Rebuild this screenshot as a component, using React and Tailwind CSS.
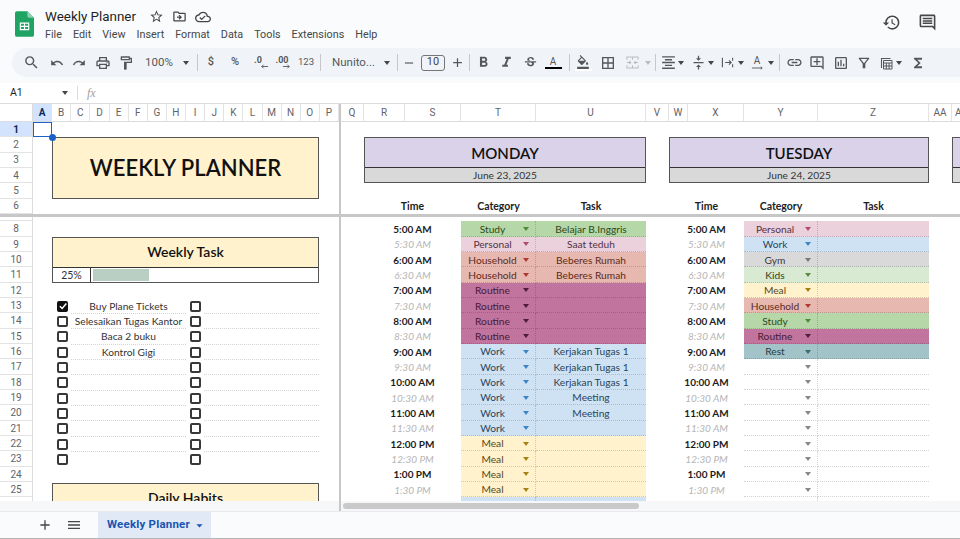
import React from 'react';
import {
  MdSearch, MdUndo, MdRedo, MdOutlineLocalPrintshop, MdOutlineFormatPaint, MdArrowDropDown,
  MdRemove, MdAdd, MdFormatBold, MdFormatItalic, MdStrikethroughS, MdOutlineFormatColorFill,
  MdBorderAll, MdFormatAlignCenter, MdVerticalAlignCenter, MdLink, MdOutlineAddComment,
  MdOutlineInsertChart, MdOutlineFilterAlt, MdFunctions, MdHistory, MdOutlineComment,
  MdStarBorder, MdOutlineDriveFileMove, MdOutlineCloudDone, MdMenu,
} from 'react-icons/md';

const CATS = {
  Study: { cell: 'bg-[#b6d7a8] text-[#2c4a20]', caret: 'border-t-[#4f8a3a]' },
  Personal: { cell: 'bg-[#ead1dc] text-[#55313f]', caret: 'border-t-[#b04a72]' },
  Household: { cell: 'bg-[#e6b8af] text-[#5c2a20]', caret: 'border-t-[#b03a2e]' },
  Routine: { cell: 'bg-[#c0749e] text-[#481a36]', caret: 'border-t-[#4f1c3c]' },
  Work: { cell: 'bg-[#cfe2f3] text-[#27445c]', caret: 'border-t-[#3d85c6]' },
  Meal: { cell: 'bg-[#fff2cc] text-[#574818]', caret: 'border-t-[#a8801a]' },
  Gym: { cell: 'bg-[#d9d9d9] text-[#3a3a3a]', caret: 'border-t-[#777777]' },
  Kids: { cell: 'bg-[#d9ead3] text-[#2c4225]', caret: 'border-t-[#5b8c42]' },
  Rest: { cell: 'bg-[#a2c4c9] text-[#1f3c41]', caret: 'border-t-[#3a6a72]' },
  '': { cell: 'bg-white text-[#333333]', caret: 'border-t-[#888888]' },
};

const TIMES = [
  '5:00 AM', '5:30 AM', '6:00 AM', '6:30 AM', '7:00 AM', '7:30 AM', '8:00 AM', '8:30 AM', '9:00 AM', '9:30 AM',
  '10:00 AM', '10:30 AM', '11:00 AM', '11:30 AM', '12:00 PM', '12:30 PM', '1:00 PM', '1:30 PM', '2:00 PM',
];

const MONDAY = [
  ['Study', 'Belajar B.Inggris'], ['Personal', 'Saat teduh'], ['Household', 'Beberes Rumah'], ['Household', 'Beberes Rumah'],
  ['Routine', ''], ['Routine', ''], ['Routine', ''], ['Routine', ''],
  ['Work', 'Kerjakan Tugas 1'], ['Work', 'Kerjakan Tugas 1'], ['Work', 'Kerjakan Tugas 1'], ['Work', 'Meeting'], ['Work', 'Meeting'], ['Work', ''],
  ['Meal', ''], ['Meal', ''], ['Meal', ''], ['Meal', ''], ['Work', ''],
];

const TUESDAY = [
  ['Personal', ''], ['Work', ''], ['Gym', ''], ['Kids', ''], ['Meal', ''], ['Household', ''], ['Study', ''], ['Routine', ''], ['Rest', ''],
  ['', ''], ['', ''], ['', ''], ['', ''], ['', ''], ['', ''], ['', ''], ['', ''], ['', ''], ['', ''],
];

const LEFT_COLS = ['A', 'B', 'C', 'D', 'E', 'F', 'G', 'H', 'I', 'J', 'K', 'L', 'M', 'N', 'O', 'P'];
const RIGHT_COLS = [
  ['Q', 'w-[23px]'], ['R', 'w-[41px]'], ['S', 'w-[56px]'], ['T', 'w-[75px]'], ['U', 'w-[110px]'], ['V', 'w-[23px]'],
  ['W', 'w-[19px]'], ['X', 'w-[56px]'], ['Y', 'w-[74px]'], ['Z', 'w-[111px]'], ['AA', 'w-[23px]'], ['AB', 'w-[20px]'],
];
const TASKS = ['Buy Plane Tickets', 'Selesaikan Tugas Kantor', 'Baca 2 buku', 'Kontrol Gigi', '', '', '', '', '', '', ''];

const UI = "font-['Roboto',sans-serif]";
const CELL = "font-['Lato',sans-serif]";

const Tool = ({ className = '', children }) => (
  <div className={`flex h-full shrink-0 items-center justify-center text-[#55585a] ${className}`}>{children}</div>
);

const Sep = ({ className = '' }) => <div className={`h-[17px] w-px shrink-0 bg-[#c7c7c7] ${className}`} />;

const Caret = ({ className = '' }) => (
  <div className={`h-0 w-0 border-x-[3.5px] border-t-[4px] border-x-transparent border-t-[#444746] ${className}`} />
);

const Cat = ({ name, task }) => {
  const c = CATS[name];
  return (
    <>
      <div className={`flex h-[15.33px] items-center border-b border-r border-dotted border-[#0000002b] pl-[4px] pr-[6px] pt-[1px] ${c.cell}`}>
        <span className="flex-1 text-center text-[10.2px] leading-none whitespace-nowrap">{name}</span>
        <div className={`ml-[3px] h-0 w-0 border-x-[3.5px] border-t-[4px] border-x-transparent ${c.caret}`} />
      </div>
      <div className={`flex h-[15.33px] items-center justify-center border-b border-dotted border-[#0000002b] pt-[1px] text-[10.2px] leading-none ${c.cell}`}>
        {task}
      </div>
    </>
  );
};

const DayHeader = ({ day, date, width }) => (
  <div className={`h-[46px] shrink-0 border border-[#555555] ${width}`}>
    <div className="flex h-[30px] items-center justify-center border-b border-[#333333] bg-[#d9d2e9] text-[15px] font-semibold text-[#111111]">{day}</div>
    <div className="flex h-[14px] items-center justify-center bg-[#d9d9d9] text-[10.2px] leading-none text-[#333333]">{date}</div>
  </div>
);

const Labels = ({ grid }) => (
  <div className={`grid h-[15.33px] items-center text-center text-[10.5px] font-bold text-[#222222] ${grid}`}>
    <div>Time</div>
    <div>Category</div>
    <div>Task</div>
  </div>
);

const Schedule = ({ grid, rows }) => (
  <div className={`grid ${grid}`}>
    {rows.map(([cat, task], i) => (
      <React.Fragment key={i}>
        <div
          className={`flex h-[15.33px] items-center justify-center text-[10px] leading-none ${
            i % 2 === 0 ? 'font-bold text-[#1c1c1c]' : 'italic text-[#b5b5b5]'
          }`}
        >
          {TIMES[i]}
        </div>
        <Cat name={cat} task={task} />
      </React.Fragment>
    ))}
  </div>
);

const Check = ({ checked }) =>
  checked ? (
    <div className="flex h-[11px] w-[11px] items-center justify-center rounded-[2px] bg-[#111111]">
      <svg viewBox="0 0 12 12" className="h-[10px] w-[10px]">
        <path d="M2.2 6.2 5 9l5-6" fill="none" stroke="#ffffff" strokeWidth="1.8" />
      </svg>
    </div>
  ) : (
    <div className="h-[11px] w-[11px] rounded-[2px] border-2 border-[#383838]" />
  );

const SheetsLogo = () => (
  <svg viewBox="0 0 20 27" className="h-[26px] w-[19px]">
    <path d="M2 0h11l7 7v18a2 2 0 0 1-2 2H2a2 2 0 0 1-2-2V2a2 2 0 0 1 2-2z" fill="#1fa463" />
    <path d="M13 0l7 7h-5a2 2 0 0 1-2-2z" fill="#8ed1b1" />
    <path d="M5 12h10v8H5zM6.2 13.2v2.2h3.2v-2.2zm4.4 0v2.2h3.2v-2.2zM6.2 16.6v2.2h3.2v-2.2zm4.4 0v2.2h3.2v-2.2z" fill="#ffffff" fillRule="evenodd" />
  </svg>
);

export default function App() {
  return (
    <div className={`flex h-[539px] w-[960px] flex-col overflow-hidden bg-[#f9fbfd] ${UI}`}>
      {/* Title bar */}
      <div className="flex h-[48px] shrink-0">
        <div className="ml-[15px] mt-[11px]">
          <SheetsLogo />
        </div>
        <div className="ml-[11px] flex flex-col">
          <div className="mt-[7px] flex h-[19px] items-center">
            <span className="text-[13.4px] leading-none text-[#1f1f1f]">Weekly Planner</span>
            <MdStarBorder className="ml-[13px] text-[15px] text-[#444746]" />
            <MdOutlineDriveFileMove className="ml-[8px] text-[15px] text-[#444746]" />
            <MdOutlineCloudDone className="ml-[8px] text-[16px] text-[#444746]" />
          </div>
          <div className="mt-[2px] flex gap-[11px] text-[10.8px] leading-[14px] text-[#444746]">
            <span>File</span>
            <span>Edit</span>
            <span>View</span>
            <span>Insert</span>
            <span>Format</span>
            <span>Data</span>
            <span>Tools</span>
            <span>Extensions</span>
            <span>Help</span>
          </div>
        </div>
        <div className="ml-auto mr-[23px] mt-[11px] flex h-[22px] items-center gap-[17px] text-[#444746]">
          <MdHistory className="text-[19px]" />
          <MdOutlineComment className="text-[19px]" />
        </div>
      </div>

      {/* Toolbar */}
      <div className="ml-[12px] flex h-[29px] shrink-0 items-center rounded-l-full bg-[#f0f4f9] pl-[7px] text-[#55585a]">
        <Tool className="w-[24px]"><MdSearch className="text-[17px]" /></Tool>
        <Tool className="ml-[3px] w-[22px]"><MdUndo className="text-[14px]" /></Tool>
        <Tool className="w-[22px]"><MdRedo className="text-[14px]" /></Tool>
        <Tool className="ml-[2px] w-[22px]"><MdOutlineLocalPrintshop className="text-[16px]" /></Tool>
        <Tool className="ml-[1px] w-[22px]"><MdOutlineFormatPaint className="text-[16px]" /></Tool>
        <Tool className="ml-[8px] w-[52px] justify-start text-[11.5px]">
          <span>100%</span>
          <Caret className="ml-[10px]" />
        </Tool>
        <Sep />
        <Tool className="ml-[2px] w-[22px] text-[11px] font-medium">$</Tool>
        <Tool className="ml-[2px] w-[22px] text-[11px] font-medium">%</Tool>
        <Tool className="ml-[3px] w-[22px] flex-col text-[9px] font-bold leading-[8px]">
          <span className="-ml-[4px]">.0</span>
          <svg viewBox="0 0 10 5" className="ml-[8px] h-[5px] w-[9px]"><path d="M9 2.5H2M4 .5 2 2.5l2 2" fill="none" stroke="currentColor" strokeWidth="1" /></svg>
        </Tool>
        <Tool className="w-[22px] flex-col text-[9px] font-bold leading-[8px]">
          <span>.00</span>
          <svg viewBox="0 0 10 5" className="ml-[8px] h-[5px] w-[9px]"><path d="M1 2.5h7M6 .5l2 2-2 2" fill="none" stroke="currentColor" strokeWidth="1" /></svg>
        </Tool>
        <Tool className="ml-[1px] w-[24px] text-[9.5px]">123</Tool>
        <Sep className="ml-[2px]" />
        <Tool className="ml-[11px] w-[65px] justify-start text-[11.5px]">
          <span>Nunito...</span>
          <Caret className="ml-[9px]" />
        </Tool>
        <Sep />
        <Tool className="ml-[1px] w-[20px]"><MdRemove className="text-[14px]" /></Tool>
        <div className="ml-[2px] flex h-[16px] w-[24px] shrink-0 items-center justify-center rounded-[3px] border border-[#747775] text-[11px] text-[#444746]">10</div>
        <Tool className="ml-[2px] w-[20px]"><MdAdd className="text-[15px]" /></Tool>
        <Sep className="ml-[2px]" />
        <Tool className="ml-[2px] w-[22px]"><MdFormatBold className="text-[17px]" /></Tool>
        <Tool className="ml-[1px] w-[22px]"><MdFormatItalic className="text-[17px]" /></Tool>
        <Tool className="ml-[2px] w-[22px]"><MdStrikethroughS className="text-[15px]" /></Tool>
        <Tool className="ml-[1px] w-[22px] flex-col">
          <span className="text-[10px] leading-[11px]">A</span>
          <div className="h-[2px] w-[17px] bg-black" />
        </Tool>
        <Sep className="ml-[5px]" />
        <Tool className="ml-[2px] w-[22px] flex-col">
          <MdOutlineFormatColorFill className="text-[14px]" />
          <div className="h-[2px] w-[17px] bg-white" />
        </Tool>
        <Tool className="ml-[3px] w-[22px]"><MdBorderAll className="text-[16px]" /></Tool>
        <Tool className="ml-[5px] w-[16px]">
          <svg viewBox="0 0 14 14" className="h-[13px] w-[13px]">
            <path d="M1 4V1h12v3M1 10v3h12v-3M7 1v3M7 10v3M1 7h4M13 7H9M3.6 5.4 5.2 7 3.6 8.6M10.4 5.4 8.8 7l1.6 1.6" fill="none" stroke="#b9bcbf" strokeWidth="1.1" />
          </svg>
        </Tool>
        <Tool className="ml-[2px] w-[12px]"><Caret className="border-t-[#b9bcbf]" /></Tool>
        <Sep className="ml-[1px]" />
        <Tool className="ml-[3px] w-[18px]"><MdFormatAlignCenter className="text-[17px]" /></Tool>
        <Tool className="w-[8px]"><Caret /></Tool>
        <Tool className="ml-[5px] w-[16px]"><MdVerticalAlignCenter className="text-[15px]" /></Tool>
        <Tool className="ml-[1px] w-[8px]"><Caret /></Tool>
        <Tool className="ml-[4px] w-[16px]">
          <svg viewBox="0 0 14 14" className="h-[13px] w-[13px]">
            <path d="M1.5 2v10M12.5 2v3M12.5 9v3M4.5 7H11M8.6 4.6 11 7 8.6 9.4" fill="none" stroke="currentColor" strokeWidth="1.2" />
          </svg>
        </Tool>
        <Tool className="ml-[2px] w-[8px]"><Caret /></Tool>
        <Tool className="ml-[4px] w-[16px] flex-col">
          <span className="text-[10px] leading-[10px]">A</span>
          <svg viewBox="0 0 14 4" className="h-[4px] w-[13px]"><path d="M1 2h11M10.5.6 12 2l-1.5 1.4" fill="none" stroke="currentColor" strokeWidth="1" /></svg>
        </Tool>
        <Tool className="ml-[2px] w-[8px]"><Caret /></Tool>
        <Sep className="ml-[4px]" />
        <Tool className="ml-[3px] w-[22px]"><MdLink className="text-[17px]" /></Tool>
        <Tool className="ml-[1px] w-[22px]"><MdOutlineAddComment className="text-[16px]" /></Tool>
        <Tool className="ml-[2px] w-[22px]"><MdOutlineInsertChart className="text-[16px]" /></Tool>
        <Tool className="ml-[1px] w-[22px]"><MdOutlineFilterAlt className="text-[16px]" /></Tool>
        <Tool className="ml-[2px] w-[18px]">
          <svg viewBox="0 0 14 14" className="h-[14px] w-[14px]">
            <path d="M2.5 12V2.5h9" fill="none" stroke="currentColor" strokeWidth="1.1" />
            <path d="M4.5 4.5h8.5V13H4.5zM4.5 7h8.5M4.5 10h8.5M7.3 7v6M10.1 7v6" fill="none" stroke="currentColor" strokeWidth="1" />
          </svg>
        </Tool>
        <Tool className="w-[8px]"><Caret /></Tool>
        <Tool className="ml-[5px] w-[20px]"><MdFunctions className="text-[16px]" /></Tool>
      </div>

      {/* Formula bar */}
      <div className="mt-[6px] flex h-[21px] shrink-0 items-center border-b border-[#dadce0] bg-white text-[#1f1f1f]">
        <span className="ml-[10px] w-[52px] text-[10.5px]">A1</span>
        <Caret className="border-t-[#333333]" />
        <div className="ml-[9px] h-[14px] w-px bg-[#dadce0]" />
        <span className="ml-[9px] font-['Liberation_Serif',serif] text-[12px] italic text-[#a0a0a0]">fx</span>
      </div>

      {/* Sheet grid */}
      <div className={`grid h-[397px] shrink-0 grid-cols-[33px_306px_2px_1fr] grid-rows-[18px_92px_3px_284px] bg-white ${CELL}`}>
        <div className="border-b border-r border-[#dadce0] bg-white" />
        <div className={`grid grid-cols-16 border-b border-[#dadce0] text-[10px] text-[#5f6368] ${UI}`}>
          {LEFT_COLS.map((c, i) => (
            <div
              key={c}
              className={`flex items-center justify-center border-r border-[#e3e3e3] ${i === 0 ? 'bg-[#d3e3fd] font-bold text-[#0b2a55]' : ''}`}
            >
              {c}
            </div>
          ))}
        </div>
        <div className="bg-[#c7c7c7]" />
        <div className={`flex overflow-hidden border-b border-[#dadce0] text-[10px] text-[#5f6368] ${UI}`}>
          {RIGHT_COLS.map(([c, w]) => (
            <div key={c} className={`flex shrink-0 items-center justify-center border-r border-[#e3e3e3] ${w}`}>
              {c}
            </div>
          ))}
        </div>

        {/* Frozen row numbers */}
        <div className={`border-r border-[#dadce0] text-[10px] text-[#5f6368] ${UI}`}>
          {[1, 2, 3, 4, 5, 6].map((n) => (
            <div
              key={n}
              className={`flex h-[15.33px] items-center justify-center border-b border-[#e3e3e3] ${n === 1 ? 'bg-[#d3e3fd] font-bold text-[#0b2a55]' : ''}`}
            >
              {n}
            </div>
          ))}
        </div>

        {/* Title */}
        <div className="relative pl-[19px] pt-[15.33px]">
          <div className="flex h-[61.33px] w-[267px] items-center justify-center border border-[#555555] bg-[#fff2cc] text-[22px] font-semibold text-[#111111]">
            WEEKLY PLANNER
          </div>
          <div className="absolute left-0 top-0 h-[15.33px] w-[19px] border-[1.5px] border-[#1a62c9]" />
          <div className="absolute left-[15.5px] top-[12px] h-[7px] w-[7px] rounded-full bg-[#1a62c9]" />
        </div>
        <div className="bg-[#c7c7c7]" />

        {/* Day headers */}
        <div className="overflow-hidden">
          <div className="flex pl-[23px] pt-[15.33px]">
            <DayHeader day="MONDAY" date="June 23, 2025" width="w-[282px]" />
            <DayHeader day="TUESDAY" date="June 24, 2025" width="ml-[23px] w-[260px]" />
            <DayHeader day="" date="" width="ml-[23px] w-[282px]" />
          </div>
          <div className="mt-[15.33px] flex pl-[23px]">
            <div className="w-[282px]"><Labels grid="grid-cols-[97px_75px_110px]" /></div>
            <div className="ml-[23px] w-[260px]"><Labels grid="grid-cols-[75px_74px_111px]" /></div>
          </div>
        </div>

        <div className="col-span-4 bg-[#c7c7c7]" />

        {/* Row numbers below the freeze */}
        <div className={`overflow-hidden border-r border-[#dadce0] text-[10px] text-[#5f6368] ${UI}`}>
          <div className="h-[4.3px] border-b border-[#e3e3e3]" />
          {[8, 9, 10, 11, 12, 13, 14, 15, 16, 17, 18, 19, 20, 21, 22, 23, 24, 25].map((n) => (
            <div key={n} className="flex h-[15.33px] items-center justify-center border-b border-[#e3e3e3] pt-[1px]">
              {n}
            </div>
          ))}
        </div>

        {/* Left pane */}
        <div className="overflow-hidden pl-[19px] pt-[19.63px]">
          <div className="w-[267px] border border-[#555555]">
            <div className="flex h-[30px] items-center justify-center border-b border-[#333333] bg-[#fff2cc] pb-[1px] text-[14px] font-semibold text-[#111111]">
              Weekly Task
            </div>
            <div className="flex h-[14.5px]">
              <div className="flex w-[38px] items-center justify-center border-r border-[#333333] pt-[1px] text-[10.5px] text-[#333333]">25%</div>
              <div className="flex-1 px-[2px] py-[1px]">
                <div className="h-full w-[25%] bg-[#b9cfc4]" />
              </div>
            </div>
          </div>
          <div className="mt-[15.5px]">
            {TASKS.map((t, i) => (
              <div key={i} className="flex h-[15.33px] items-center text-[10.2px] text-[#333333]">
                <div className="ml-[5px] w-[14px]"><Check checked={i === 0} /></div>
                <div className={`flex h-full w-[115px] items-center justify-center whitespace-nowrap pt-[1px] ${i < 10 ? 'border-b border-dotted border-[#0000002b]' : ''}`}>{t}</div>
                <div className="ml-[4px] w-[14px]"><Check /></div>
                <div className={`h-full w-[115px] ${i < 10 ? 'border-b border-dotted border-[#0000002b]' : ''}`} />
              </div>
            ))}
          </div>
          <div className="mt-[15.5px] flex h-[31px] w-[267px] items-center justify-center border border-[#555555] bg-[#fff2cc] pb-[1px] text-[14px] font-semibold text-[#111111]">
            Daily Habits
          </div>
        </div>

        <div className="bg-[#c7c7c7]" />

        {/* Schedules */}
        <div className="flex overflow-hidden pl-[23px] pt-[4.3px]">
          <div className="w-[282px] shrink-0"><Schedule grid="grid-cols-[97px_75px_110px]" rows={MONDAY} /></div>
          <div className="ml-[23px] w-[260px] shrink-0"><Schedule grid="grid-cols-[75px_74px_111px]" rows={TUESDAY} /></div>
        </div>
      </div>

      {/* Scrollbar strip */}
      <div className="flex h-[10px] shrink-0 bg-[#f6f7f8]">
        <div className="w-[339px] shrink-0" />
        <div className="w-[2px] shrink-0 bg-[#c7c7c7]" />
        <div className="ml-[2px] mt-[2px] h-[6px] w-[296px] rounded-full bg-[#c9c9c9]" />
      </div>

      {/* Sheet tabs */}
      <div className="flex h-[27px] shrink-0 items-center border-t border-[#e8eaed] text-[#444746]">
        <MdAdd className="ml-[37px] text-[16px]" />
        <MdMenu className="ml-[13px] text-[16px]" />
        <div className="ml-[16px] flex h-full w-[113px] items-center bg-[#e1e9f7] pl-[9px] text-[11.5px] font-bold tracking-[0.2px] text-[#1a56b0]">
          <span>Weekly Planner</span>
          <MdArrowDropDown className="ml-[2px] text-[15px]" />
        </div>
      </div>
      <div className="h-[1px] shrink-0 bg-[#b5b5b5]" />
    </div>
  );
}
